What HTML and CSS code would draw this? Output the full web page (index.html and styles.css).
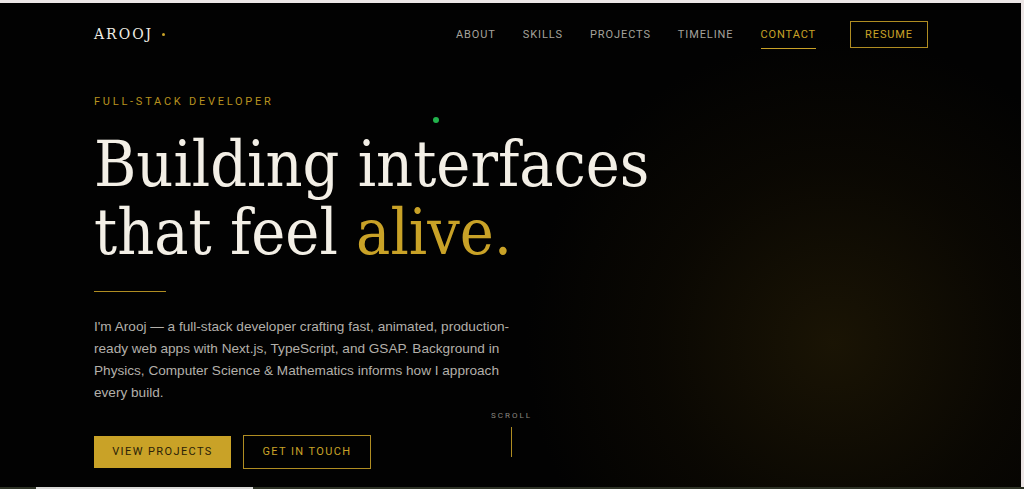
FILE: index.html
```html
<!DOCTYPE html>
<html lang="en">
<head>
    <meta charset="UTF-8">
    <meta name="viewport" content="width=device-width, initial-scale=1.0">
    <title>Arooj — Full-Stack Developer</title>
    <link rel="stylesheet" href="styles.css">
</head>
<body>
    <div class="page">
        <div class="glow"></div>
        <span class="cursor-dot"></span>

        <header class="nav">
            <a class="logo" href="#">AROOJ<span class="logo-dot"></span></a>
            <nav class="nav-links">
                <a href="#about">ABOUT</a>
                <a href="#skills">SKILLS</a>
                <a href="#projects">PROJECTS</a>
                <a href="#timeline">TIMELINE</a>
                <a href="#contact" class="active">CONTACT</a>
                <a href="#resume" class="resume-btn">RESUME</a>
            </nav>
        </header>

        <section class="hero">
            <p class="eyebrow">FULL-STACK DEVELOPER</p>
            <h1 class="headline">Building interfaces<br>that feel <span class="accent">alive.</span></h1>
            <div class="rule"></div>
            <p class="intro">I'm Arooj — a full-stack developer crafting fast, animated, production-ready web apps with Next.js, TypeScript, and GSAP. Background in Physics, Computer Science &amp; Mathematics informs how I approach every build.</p>

            <div class="actions">
                <div class="buttons">
                    <a href="#projects" class="btn btn-solid">VIEW PROJECTS</a>
                    <a href="#contact" class="btn btn-outline">GET IN TOUCH</a>
                </div>
                <div class="scroll">
                    <span class="scroll-label">SCROLL</span>
                    <span class="scroll-line"></span>
                </div>
            </div>
        </section>
    </div>
    <div class="bottom-bar">
        <span class="bar-gap"></span>
        <span class="bar-light"></span>
        <span class="bar-dark"></span>
    </div>
</body>
</html>
```

FILE: styles.css
```css
body {
    margin: 0;
    background-color: #ece6e6;
    font-family: 'Liberation Sans', Arial, sans-serif;
    color: #b3b0aa;
    overflow: hidden;
}
a {
    text-decoration: none;
    color: inherit;
}
.page {
    position: relative;
    height: 484px;
    margin-top: 3px;
    margin-right: 3px;
    background-color: #020202;
    overflow: hidden;
}
.glow {
    position: absolute;
    left: 523px;
    top: 30px;
    width: 620px;
    height: 620px;
    border-radius: 50%;
    background: radial-gradient(circle, rgba(42, 32, 6, 0.6) 0%, rgba(22, 16, 3, 0.4) 40%, rgba(0, 0, 0, 0) 70%);
    pointer-events: none;
}
.cursor-dot {
    position: absolute;
    left: 433px;
    top: 114px;
    width: 6px;
    height: 6px;
    border-radius: 50%;
    background-color: #22b24c;
}
.nav {
    position: relative;
    display: flex;
    justify-content: space-between;
    align-items: center;
    height: 62px;
    padding: 0 93px 0 94px;
}
.logo {
    display: flex;
    align-items: center;
    font-family: 'DejaVu Serif', Georgia, serif;
    font-size: 14px;
    letter-spacing: 2px;
    color: #f0ece4;
}
.logo-dot {
    width: 3px;
    height: 3px;
    border-radius: 50%;
    background-color: #c9a227;
    margin-left: 9px;
}
.nav-links {
    display: flex;
    align-items: center;
    font-family: Roboto, 'Liberation Sans', sans-serif;
    font-size: 11px;
    letter-spacing: 0.9px;
}
.nav-links a {
    position: relative;
    margin-left: 27px;
    color: #a5a29c;
}
.nav-links a:first-child {
    margin-left: 0;
}
.nav-links a.active {
    color: #c9a227;
}
.nav-links a.active::after {
    content: '';
    position: absolute;
    left: 0;
    right: 0;
    bottom: -8px;
    height: 1px;
    background-color: #c9a227;
}
.nav-links a.resume-btn {
    margin-left: 34px;
    color: #c9a227;
    border: 1px solid #b08d22;
    padding: 6px 14px;
}
.hero {
    position: relative;
    padding: 0 94px;
}
.eyebrow {
    margin: 30px 0 0;
    font-family: Roboto, 'Liberation Sans', sans-serif;
    font-size: 11px;
    letter-spacing: 2.75px;
    color: #b8921f;
}
.headline {
    margin: 22px 0 0;
    font-family: 'DejaVu Serif Condensed', 'DejaVu Serif', Georgia, serif;
    font-stretch: condensed;
    font-weight: 400;
    font-size: 64px;
    line-height: 68px;
    color: #f3efe6;
}
.accent {
    color: #c9a227;
}
.rule {
    width: 72px;
    height: 1px;
    background-color: #b08d22;
    margin-top: 25px;
}
.intro {
    margin: 24px 0 0;
    max-width: 425px;
    font-size: 13.6px;
    line-height: 22px;
    color: #b3b0aa;
}
.actions {
    display: flex;
    align-items: flex-start;
    margin-top: 7px;
}
.buttons {
    display: flex;
    align-items: center;
    gap: 12px;
    margin-top: 24px;
}
.btn {
    font-family: Roboto, 'Liberation Sans', sans-serif;
    font-size: 11px;
    letter-spacing: 1.4px;
    text-align: center;
    box-sizing: border-box;
}
.btn-solid {
    width: 137px;
    height: 32px;
    line-height: 32px;
    background-color: #c9a227;
    color: #2a2108;
}
.btn-solid:hover {
    background-color: #d8b23a;
}
.btn-outline {
    width: 128px;
    height: 34px;
    line-height: 32px;
    border: 1px solid #b08d22;
    color: #c9a227;
}
.scroll {
    display: flex;
    flex-direction: column;
    align-items: center;
    margin-left: 120px;
}
.scroll-label {
    font-family: Roboto, 'Liberation Sans', sans-serif;
    font-size: 8px;
    letter-spacing: 2px;
    color: #8a8780;
}
.scroll-line {
    width: 1px;
    height: 30px;
    margin-top: 7px;
    background-color: #b08d22;
}
.bottom-bar {
    display: flex;
    height: 2px;
}
.bar-gap {
    width: 36px;
    background-color: #2e3326;
}
.bar-light {
    width: 217px;
    background-color: #d9d9d6;
}
.bar-dark {
    flex: 1;
    background-color: #2e3326;
}
```
